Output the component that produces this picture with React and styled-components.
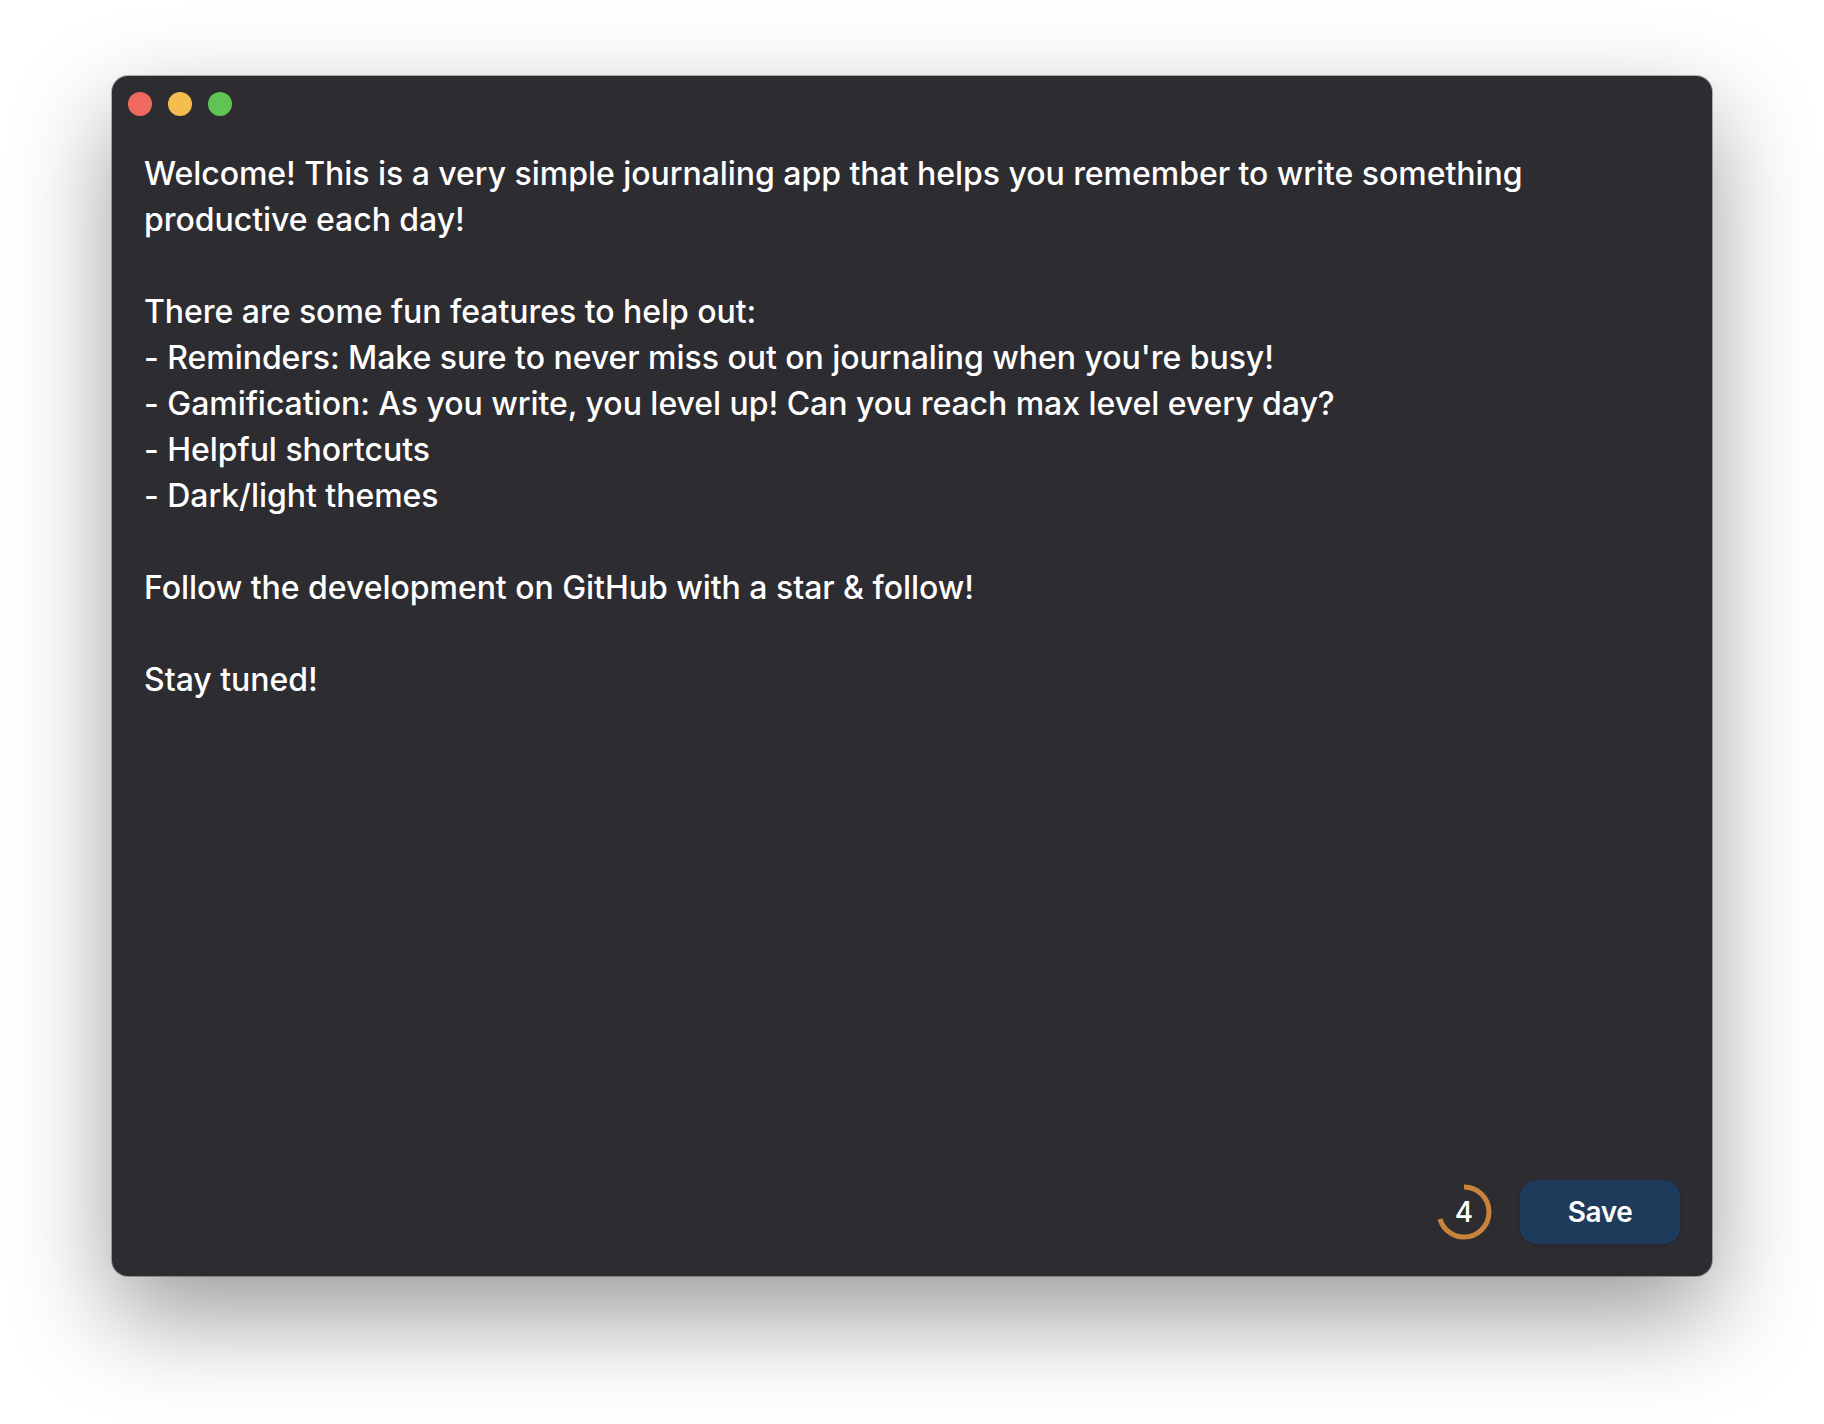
import styled, { createGlobalStyle } from "styled-components";

const GlobalStyle = createGlobalStyle`
  html, body {
    margin: 0;
    padding: 0;
    background: #ffffff;
  }
`;

const Page = styled.div`
  width: 1824px;
  height: 1424px;
  box-sizing: border-box;
  padding: 76px 112px 148px;
  overflow: hidden;
`;

const Window = styled.main`
  width: 1600px;
  height: 1200px;
  box-sizing: border-box;
  display: flex;
  flex-direction: column;
  background: #2d2c31;
  border-radius: 16px;
  box-shadow: 0 0 0 1px rgba(0, 0, 0, 0.28), 0 40px 100px rgba(0, 0, 0, 0.4);
  font-family: Inter, "Noto Sans", sans-serif;
  color: #ffffff;
`;

const TitleBar = styled.div`
  display: flex;
  gap: 16px;
  padding: 16px 16px 0;
`;

const Light = styled.span`
  width: 24px;
  height: 24px;
  border-radius: 50%;
  background: ${(props) => props.color};
`;

const Editor = styled.div`
  flex: 1;
  padding: 35px 120px 0 32px;
  font-size: 32px;
  font-weight: 450;
  line-height: 46px;
  letter-spacing: -0.04px;
  white-space: pre-wrap;
`;

const Footer = styled.div`
  display: flex;
  align-items: center;
  justify-content: flex-end;
  gap: 28px;
  padding: 0 32px 32px;
`;

const Counter = styled.div`
  position: relative;
  width: 56px;
  height: 56px;
  display: flex;
  align-items: center;
  justify-content: center;
  font-size: 28px;
  font-weight: 500;
  svg {
    position: absolute;
    inset: 0;
  }
`;

const SaveButton = styled.button`
  width: 160px;
  height: 64px;
  border: 0;
  border-radius: 16px;
  background: #1f3b5c;
  box-shadow: 0 1px 3px rgba(0, 0, 0, 0.2);
  color: #ffffff;
  font-family: inherit;
  font-size: 28px;
  font-weight: 600;
  letter-spacing: -0.4px;
`;

const text = `Welcome! This is a very simple journaling app that helps you remember to write something productive each day!

There are some fun features to help out:
- Reminders: Make sure to never miss out on journaling when you're busy!
- Gamification: As you write, you level up! Can you reach max level every day?
- Helpful shortcuts
- Dark/light themes

Follow the development on GitHub with a star & follow!

Stay tuned!`;

// ring is a fixed 70% of the circle, starting at the top
const RADIUS = 25;
const CIRCUMFERENCE = 2 * Math.PI * RADIUS;

export default function App() {
  return (
    <Page>
      <GlobalStyle />
      <Window>
        <TitleBar>
          <Light color="#ee6a5f" />
          <Light color="#f5bd4f" />
          <Light color="#61c454" />
        </TitleBar>
        <Editor>{text}</Editor>
        <Footer>
          <Counter>
            <svg width="56" height="56" viewBox="0 0 56 56">
              <circle
                cx="28"
                cy="28"
                r={RADIUS}
                fill="none"
                stroke="#c9833a"
                strokeWidth="5"
                strokeDasharray={`${CIRCUMFERENCE * 0.7} ${CIRCUMFERENCE}`}
                transform="rotate(-90 28 28)"
              />
            </svg>
            4
          </Counter>
          <SaveButton>Save</SaveButton>
        </Footer>
      </Window>
    </Page>
  );
}
